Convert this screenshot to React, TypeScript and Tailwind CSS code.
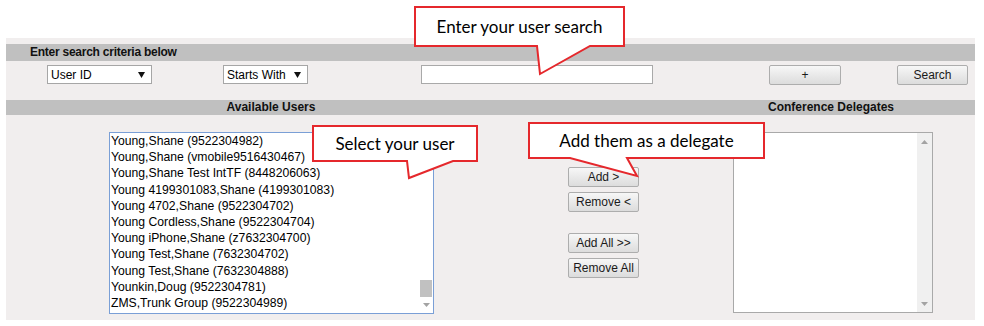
import React from 'react';

const users = [
  'Young,Shane (9522304982)',
  'Young,Shane (vmobile9516430467)',
  'Young,Shane Test IntTF (8448206063)',
  'Young 4199301083,Shane (4199301083)',
  'Young 4702,Shane (9522304702)',
  'Young Cordless,Shane (9522304704)',
  'Young iPhone,Shane (z7632304700)',
  'Young Test,Shane (7632304702)',
  'Young Test,Shane (7632304888)',
  'Younkin,Doug (9522304781)',
  'ZMS,Trunk Group (9522304989)',
];

const Caret = ({ up = false, color = '#a3a3a3' }: { up?: boolean; color?: string }) => (
  <svg width="7" height="4" viewBox="0 0 7 4">
    <polygon points={up ? '0,4 7,4 3.5,0' : '0,0 7,0 3.5,4'} fill={color} />
  </svg>
);

const Select = ({ label, className }: { label: string; className: string }) => (
  <div className={`h-[19px] bg-white border border-[#a6a6a6] flex items-center justify-between pl-[3px] pr-[6px] text-[12px] text-black ${className}`}>
    <span>{label}</span>
    <svg width="7" height="6" viewBox="0 0 7 6">
      <polygon points="0,0 7,0 3.5,6" fill="#111" />
    </svg>
  </div>
);

const Btn = ({ label, className }: { label: string; className: string }) => (
  <div
    className={`h-[20px] border border-[#adadad] rounded-[2px] bg-gradient-to-b from-[#f7f7f7] to-[#dcdcdc] flex items-center justify-center text-[12px] text-[#1a1a1a] whitespace-nowrap ${className}`}
  >
    {label}
  </div>
);

const Callout = ({ text, left, top, width, height }: { text: string; left: number; top: number; width: number; height: number }) => (
  <div
    className="absolute flex items-center justify-center text-[17px] text-black whitespace-nowrap font-['Lato','Open_Sans',sans-serif]"
    style={{ left, top, width, height }}
  >
    {text}
  </div>
);

export default function App() {
  return (
    <div className="relative w-[984px] h-[326px] bg-white overflow-hidden font-['Liberation_Sans',Arial,sans-serif]">
      <div className="ml-[6px] pt-[38px]">
        <div className="w-[969px] h-[282px] bg-[#f1eeee] pt-[6px]">
          <div className="h-[17px] bg-[#c0c0c0] pl-[24px] text-[12px] font-bold leading-[17px] tracking-[-0.25px] text-[#111]">
            Enter search criteria below
          </div>

          <div className="mt-[4px] h-[20px] flex items-start">
            <Select label="User ID" className="ml-[41px] w-[105px]" />
            <Select label="Starts With" className="ml-[71px] w-[85px]" />
            <div className="ml-[113px] w-[232px] h-[19px] bg-white border border-[#a9a9a9]" />
            <Btn label="+" className="ml-[116px] w-[72px]" />
            <Btn label="Search" className="ml-[56px] w-[71px]" />
          </div>

          <div className="mt-[15px] h-[15px] flex bg-[#c0c0c0] text-[12px] font-bold leading-[15px] text-[#111]">
            <div className="w-[530px] text-center">Available Users</div>
            <div className="w-[151px]" />
            <div className="w-[288px] text-center">Conference Delegates</div>
          </div>

          <div className="mt-[17px] flex items-start">
            <div className="ml-[103px] w-[325px] h-[182px] bg-white border border-[#7a9fd6] flex">
              <div className="flex-1 pl-[1px] text-[12.2px] leading-[16.2px] text-black whitespace-nowrap overflow-hidden">
                {users.map((u) => (
                  <div key={u}>{u}</div>
                ))}
              </div>
              <div className="w-[14px] flex flex-col justify-end">
                <div className="h-[17px] mx-[1px] bg-[#c1c1c1]" />
                <div className="h-[16px] flex items-center justify-center">
                  <Caret />
                </div>
              </div>
            </div>

            <div className="ml-[134px] w-[71px] pt-[35px] flex flex-col">
              <Btn label="Add >" className="w-[71px]" />
              <Btn label="Remove <" className="w-[71px] mt-[5px]" />
              <Btn label="Add All >>" className="w-[71px] mt-[21px]" />
              <Btn label="Remove All" className="w-[71px] mt-[5px]" />
            </div>

            <div className="ml-[94px] w-[200px] h-[181px] bg-white border border-[#a9a9a9] flex">
              <div className="flex-1" />
              <div className="w-[15px] bg-[#f0f0f0] flex flex-col justify-between">
                <div className="h-[17px] flex items-center justify-center">
                  <Caret up />
                </div>
                <div className="h-[17px] flex items-center justify-center">
                  <Caret />
                </div>
              </div>
            </div>
          </div>
        </div>
      </div>

      <svg className="absolute left-0 top-0 pointer-events-none" width="984" height="326" viewBox="0 0 984 326">
        <g fill="#ffffff" stroke="#e5282c" strokeWidth="2" strokeLinejoin="miter">
          <polygon points="415,7 624,7 624,46 590,46 540,74 537,46 415,46" />
          <polygon points="313,126 477,126 477,161 453,161 409,178 407,161 313,161" />
          <polygon points="529,123 764,123 764,158 627,158 637,176 570,158 529,158" />
        </g>
      </svg>
      <Callout text="Enter your user search" left={415} top={8} width={209} height={38} />
      <Callout text="Select your user" left={313} top={126} width={164} height={35} />
      <Callout text="Add them as a delegate" left={529} top={123} width={235} height={35} />
    </div>
  );
}
